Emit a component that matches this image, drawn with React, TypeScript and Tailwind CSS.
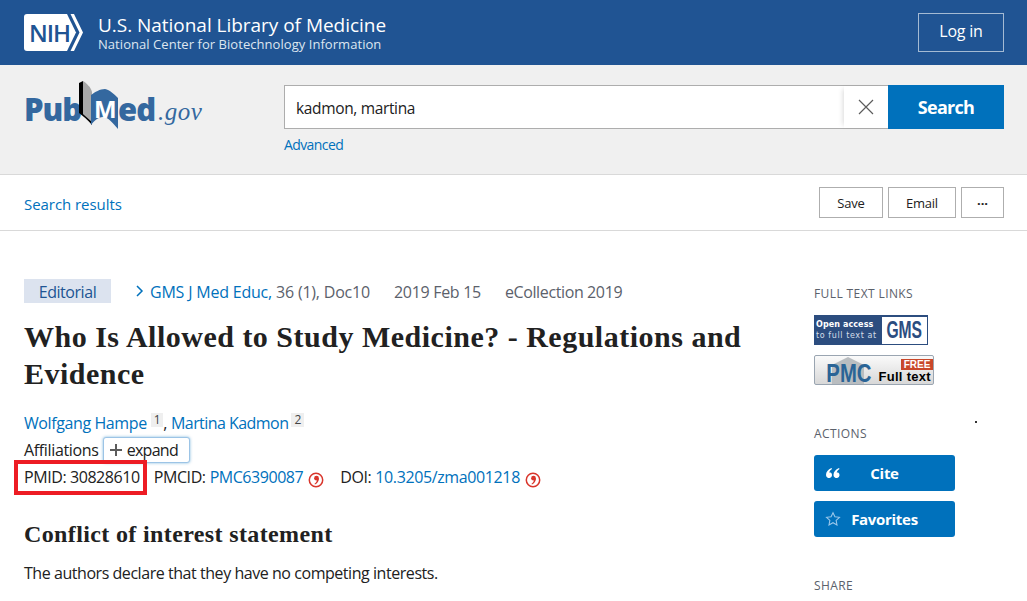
import React from "react";

const sans = "font-['Open_Sans',sans-serif]";

const CitedIcon = () => (
  <svg width="16" height="16" viewBox="0 0 16 16" className="shrink-0 mt-[6px]">
    <circle cx="8" cy="8" r="6.700" fill="none" stroke="#d9352b" strokeWidth="1.500" />
    <circle cx="8.500" cy="6.200" r="2.400" fill="#d9352b" />
    <path d="M10.900 6.200c.2 2.900-1.500 5-3.900 6.200l-.5-.7c1.500-1 2.200-2 2.400-3.400z" fill="#d9352b" />
  </svg>
);

const NihLogo = () => (
  <div className="relative w-[59px] h-[37px] shrink-0">
    <svg width="59" height="37" viewBox="0 0 59 37" className="absolute inset-0">
      <path d="M3 0h40l9 18.500-9 18.500H3a3 3 0 0 1-3-3V3a3 3 0 0 1 3-3z" fill="#fff" />
      <path d="M46.500 0h3.500l9 18.500-9 18.500h-3.500l9-18.500z" fill="#fff" />
    </svg>
    <span className="absolute left-[5px] top-[6px] text-[24px] leading-[26px] font-semibold text-[#205493] tracking-[-1px] font-['Open_Sans',sans-serif]">
      NIH
    </span>
  </div>
);

const PubmedLogo = () => (
  <div className="relative w-[180px] h-[52px]">
    <span className="absolute left-0 top-[11px] text-[31px] leading-[36px] font-extrabold text-[#34689f] tracking-[-1px] font-['Open_Sans',sans-serif]">
      Pub
    </span>
    <svg width="42" height="50" viewBox="0 0 42 50" className="absolute left-[54px] top-0">
      <path d="M5 1c3 2 8 6 9 11v30l-9-8z" fill="#a8a8a8" />
      <path d="M1 3l4-2v33l9 8v3C10 40 5 36 1 33z" fill="#000" />
      <path d="M13 15c4-3 9-6 14-6 5 1 9 5 13 9v31c-6-7-10-12-15-12-5 0-9 4-12 8z" fill="#34689f" />
    </svg>
    <span className="absolute left-[70px] top-[15px] text-[24px] leading-[28px] font-bold text-white font-['Open_Sans',sans-serif]">
      M
    </span>
    <span className="absolute left-[94px] top-[11px] text-[31px] leading-[36px] font-extrabold text-[#34689f] tracking-[-1px] font-['Open_Sans',sans-serif]">
      ed
    </span>
    <span className="absolute left-[134px] top-[17px] text-[25px] leading-[30px] italic text-[#34689f] font-['Liberation_Serif',serif] tracking-[0.5px]">
      .gov
    </span>
  </div>
);

const GmsBadge = () => (
  <div className="w-[114px] h-[30px] bg-[#2c4d7f] flex items-center pl-[2px] pr-[1px] py-[1px]">
    <div className="flex-1 flex flex-col text-white text-[8px] leading-[11px] font-['DejaVu_Sans',sans-serif] whitespace-nowrap">
      <span className="font-bold tracking-[0.1px]">Open access</span>
      <span className="text-[#d5dde8] tracking-[0.6px]">to full text at</span>
    </div>
    <div className="w-[45px] h-[27px] bg-white flex items-center justify-center text-[#2c4d7f] text-[23px] leading-none font-bold font-['Liberation_Sans',sans-serif]">
      <span className="scale-x-[0.68] inline-block">GMS</span>
    </div>
  </div>
);

const PmcBadge = () => (
  <div className="relative w-[120px] h-[30px] rounded-[2px] border border-[#9aa5b1] bg-gradient-to-b from-[#fafafa] to-[#d8d8d8]">
    <svg width="40" height="28" viewBox="0 0 40 28" className="absolute left-[13px] top-0">
      <path d="M20 1l16 8v19H4V9z" fill="#b9bdc0" />
    </svg>
    <span className="absolute left-[4px] top-[6px] w-[60px] text-center text-[#2a6496] text-[26px] leading-[22px] font-bold font-['Liberation_Sans',sans-serif]">
      <span className="scale-x-[0.78] inline-block">PMC</span>
    </span>
    <span className="absolute right-0 top-[3px] h-[11px] w-[32px] bg-[#c9472a] text-white text-[10px] leading-[11px] font-bold text-center font-['Liberation_Sans',sans-serif]">
      FREE
    </span>
    <span className="absolute right-[2px] top-[14px] text-black text-[13px] leading-[14px] font-bold font-['Liberation_Sans',sans-serif] tracking-[0.3px]">
      Full text
    </span>
  </div>
);

const App = () => {
  return (
    <div className={`relative h-[601px] w-[1027px] overflow-hidden bg-white text-[#212121] ${sans}`}>
      {/* top banner */}
      <header className="h-[65px] bg-[#205493] flex items-center justify-between pl-[24px] pr-[23px]">
        <div className="flex items-center gap-[15px]">
          <NihLogo />
          <div className="flex flex-col text-white pb-[1px]">
            <span className="text-[19px] leading-[24px] tracking-[-0.03px]">U.S. National Library of Medicine</span>
            <span className="text-[13px] leading-[15px] text-[#dde6f0] tracking-[0.05px]">National Center for Biotechnology Information</span>
          </div>
        </div>
        <button className="w-[86px] h-[39px] border border-[#a4bad3] text-white text-[16px] tracking-[-0.2px] pb-[3px]">Log in</button>
      </header>

      {/* search */}
      <section className="h-[110px] bg-[#f0f0f0] border-b border-[#d9d9d9] flex pl-[24px] pr-[23px] pt-[15px]">
        <div className="w-[260px]">
          <PubmedLogo />
        </div>
        <div className="flex-1 pt-[5px]">
          <div className="flex h-[44px]">
            <div className="flex-1 flex items-center bg-white border border-[#adadad] border-r-0 pl-[11px] pr-0 relative">
              <span className="flex-1 text-[15.500px] tracking-[-0.35px] text-[#212121] pt-[3px]">kadmon, martina</span>
              <span className="h-[42px] w-[44px] flex items-center justify-center shadow-[-4px_0_5px_-3px_rgba(0,0,0,0.15)]">
                <svg width="16" height="16" viewBox="0 0 16 16" fill="none" stroke="#5c5c5c" strokeWidth="1.200">
                  <path d="M1 1l14 14M15 1L1 15" />
                </svg>
              </span>
            </div>
            <button className="w-[116px] bg-[#0071bc] text-white text-[18px] font-bold tracking-[-0.7px]">Search</button>
          </div>
          <a className="block mt-[8px] text-[14px] leading-[16px] text-[#0071bc] tracking-[-0.6px]">Advanced</a>
        </div>
      </section>

      {/* toolbar */}
      <div className="h-[56px] border-b border-[#d9d9d9] flex items-center justify-between pl-[24px] pr-[23px]">
        <a className="text-[15px] text-[#0071bc] tracking-[-0.05px] pt-[3px]">Search results</a>
        <div className="flex gap-[5px] text-[13px] text-[#212121]">
          <button className="w-[64px] h-[31px] border border-[#aeaeae] tracking-[-0.2px] pt-[2px]">Save</button>
          <button className="w-[68px] h-[31px] border border-[#aeaeae] tracking-[-0.25px] pt-[2px]">Email</button>
          <button className="w-[43px] h-[31px] border border-[#aeaeae] font-bold leading-none pb-[4px]">...</button>
        </div>
      </div>

      <main className="flex pl-[24px]">
        {/* article */}
        <article className="w-[790px] pt-[48px]">
          <div className="flex items-center h-[24px] text-[16px] tracking-[-0.2px]">
            <span className="w-[87px] h-[24px] bg-[#dce3ef] text-[#205493] flex items-center justify-center tracking-[-0.45px] pt-[1px]">Editorial</span>
            <svg width="10" height="14" viewBox="0 0 10 14" fill="none" stroke="#0071bc" strokeWidth="1.500" className="ml-[24px] mr-[5px]">
              <path d="M2 2l5 5-5 5" />
            </svg>
            <a className="text-[#0071bc] pt-[2px]">GMS J Med Educ,</a>
            <span className="text-[#5b616b] ml-[4px] pt-[2px]">36 (1), Doc10</span>
            <span className="text-[#5b616b] ml-[24px] pt-[2px] tracking-[-0.3px]">2019 Feb 15</span>
            <span className="text-[#5b616b] ml-[24px] pt-[2px] tracking-[-0.38px]">eCollection 2019</span>
          </div>
          <h1 className="mt-[15px] text-[30px] leading-[37px] font-bold text-[#212121] font-['Liberation_Serif',serif] tracking-[0.5px] w-[740px]">
            Who Is Allowed to Study Medicine? - Regulations and Evidence
          </h1>
          <div className="mt-[19px] h-[24px] flex items-center text-[16px] tracking-[-0.4px]">
            <a className="text-[#0071bc]">Wolfgang Hampe</a>
            <sup className="ml-[4px] -mt-[6px] static bg-[#efefef] text-[#444] text-[12px] leading-[14px] px-[3px]">1</sup>
            <span className="text-[#212121]">,</span>
            <a className="text-[#0071bc] ml-[4px] tracking-[-0.55px]">Martina Kadmon</a>
            <sup className="ml-[3px] -mt-[6px] static bg-[#efefef] text-[#444] text-[12px] leading-[14px] px-[3px]">2</sup>
          </div>
          <div className="h-[27px] flex items-center text-[16px] tracking-[-0.34px] pt-[2px]">
            <span>Affiliations</span>
            <span className="ml-[4px] h-[26px] w-[87px] flex items-center gap-[5px] pl-[6px] rounded-[3px] border border-[#9cc4e6] bg-white shadow-[0_0_3px_rgba(0,113,188,0.5)] tracking-[-0.7px]">
              <svg width="12" height="12" viewBox="0 0 12 12" stroke="#5c5c5c" strokeWidth="2">
                <path d="M6 0v12M0 6h12" />
              </svg>
              expand
            </span>
          </div>
          <div className="h-[30px] flex items-center text-[16px] tracking-[-0.42px]">
            <span>PMID: 30828610</span>
            <span className="ml-[14px]">PMCID:</span>
            <a className="ml-[4px] text-[#0071bc] tracking-[-0.45px]">PMC6390087</a>
            <span className="ml-[5px]"><CitedIcon /></span>
            <span className="ml-[16px]">DOI:</span>
            <a className="ml-[4px] text-[#0071bc] tracking-[-0.38px]">10.3205/zma001218</a>
            <span className="ml-[5px]"><CitedIcon /></span>
          </div>
          <h2 className="mt-[28px] text-[24px] leading-[28px] font-bold font-['Liberation_Serif',serif] tracking-[0.37px]">
            Conflict of interest statement
          </h2>
          <p className="mt-[14px] text-[16px] leading-[22px] tracking-[-0.45px]">The authors declare that they have no competing interests.</p>
        </article>

        {/* sidebar */}
        <aside className="w-[141px] pt-[56px]">
          <h3 className="text-[12px] leading-[14px] text-[#5b616b] tracking-[0.4px]">FULL TEXT LINKS</h3>
          <div className="mt-[14px] flex flex-col gap-[10px]">
            <GmsBadge />
            <PmcBadge />
          </div>
          <h3 className="mt-[42px] text-[12px] leading-[14px] text-[#5b616b] tracking-[0.4px]">ACTIONS</h3>
          <div className="mt-[14px] flex flex-col gap-[10px]">
            <button className="relative h-[36px] w-[141px] rounded-[3px] bg-[#0071bc] text-white text-[15px] font-bold tracking-[-0.3px] pt-[1px]">
              <svg width="14" height="11" viewBox="0 0 14 11" fill="#fff" className="absolute left-[12px] top-[13px]">
                <path d="M5.500 0C2 1.500 0 4 0 7a3 3 0 1 0 5-2.200c-.7-.4-1.300-.4-1.800-.3C3.600 3 4.600 1.800 6 1z" />
                <path d="M13 0C9.500 1.500 7.500 4 7.500 7a3 3 0 1 0 5-2.200c-.7-.4-1.300-.4-1.800-.3.400-1.500 1.400-2.700 2.800-3.500z" />
              </svg>
              Cite
            </button>
            <button className="relative h-[36px] w-[141px] rounded-[3px] bg-[#0071bc] text-white text-[15px] font-bold tracking-[-0.3px] pt-[1px]">
              <svg width="16" height="16" viewBox="0 0 24 24" fill="none" stroke="#9cc8ea" strokeWidth="1.600" className="absolute left-[11px] top-[10px]">
                <path d="M12 2.500l2.900 6.200 6.800.8-5 4.700 1.300 6.800-6-3.400-6 3.400 1.300-6.800-5-4.700 6.800-.8z" />
              </svg>
              Favorites
            </button>
          </div>
          <h3 className="mt-[42px] text-[12px] leading-[14px] text-[#5b616b] tracking-[0.4px]">SHARE</h3>
        </aside>
      </main>

      {/* stray dot in the sidebar */}
      <span className="absolute left-[975px] top-[421px] w-[2px] h-[2px] bg-[#333]" />
      {/* red annotation box */}
      <div className="absolute left-[14px] top-[460px] w-[133px] h-[35px] border-[4px] border-[#ed1c24]" />
    </div>
  );
};

export default App;
